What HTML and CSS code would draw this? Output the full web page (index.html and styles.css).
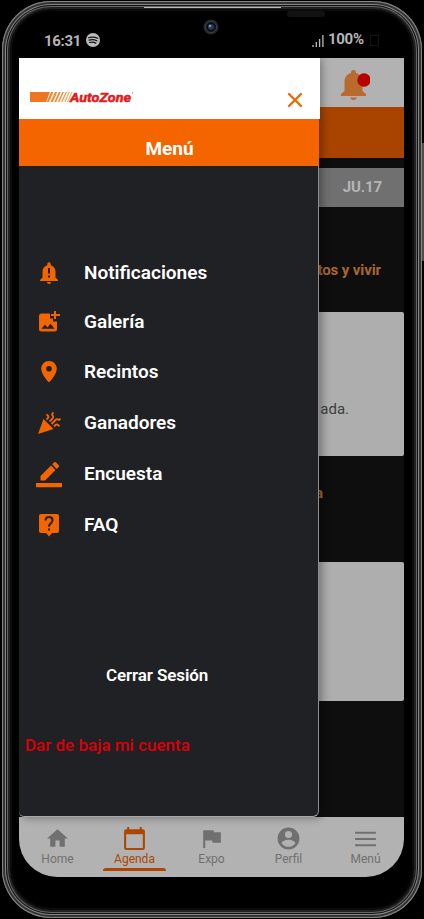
FILE: index.html
```html
<!DOCTYPE html>
<html lang="es">
<head>
<meta charset="utf-8">
<title>AutoZone Agenda</title>
<link rel="stylesheet" href="styles.css">
</head>
<body>
<div class="phone">
  <span class="top-shine"></span><span class="speaker"></span><span class="side-button"></span>
  <div class="status">
    <span class="clock">16:31</span>
    <svg class="spotify" viewBox="0 0 14 14"><circle cx="7" cy="7" r="7" fill="#bbb"/><path d="M2.500 4.700q5-1.500 9.200.6M3 7.200q4.300-1.200 7.800.6M3.500 9.500q3.500-.8 6.300.6" fill="none" stroke="#111" stroke-width="1.200" stroke-linecap="round"/></svg>
    <svg class="camera" viewBox="0 0 16 16"><circle cx="8" cy="8" r="7.500" fill="#24282b"/><circle cx="8" cy="8" r="5.500" fill="#0b1016" stroke="#3c4248"/><circle cx="8" cy="8" r="3" fill="#25384e"/><circle cx="7" cy="7" r="1.300" fill="#8195a8"/></svg>
    <svg class="signal" viewBox="0 0 12 13"><path d="M1 13v-2M4.300 13V8M7.600 13V5M10.900 13V1" stroke="#bbb" stroke-width="1.300"/></svg>
    <span class="percent">100%</span><span class="battery"></span>
  </div>
  <div class="screen">
    <header class="app-header">
      <svg class="bell" viewBox="0 0 32 32"><path d="M3 27v-2l3.500-3v-9c0-5 2.500-8 6.500-9V3q0-2 2.500-2T18 3v1c4 1 6.500 4 6.500 9v9l3.500 3v2z" fill="#b96b2e"/><path d="M12 28.500h7q-1 2.500-3.500 2.500T12 28.500z" fill="#b96b2e"/><circle cx="26" cy="11" r="6.700" fill="#b90000"/></svg>
    </header>
    <div class="banner"></div>
    <div class="date">JU.17</div>
    <h2 class="topic">tos y vivir</h2>
    <article class="card first">ada.</article>
    <h2 class="topic second-topic">a</h2>
    <article class="card second"></article>
    <nav class="tabs">
      <a><svg viewBox="0 0 24 24"><path d="M10 20v-6h4v6h5v-8h3L12 3 2 12h3v8z"/></svg><span>Home</span></a>
      <a class="active"><svg viewBox="0 0 24 24"><path d="M20 3h-1V1h-2v2H7V1H5v2H4q-2 0-2 2v16q0 2 2 2h16q2 0 2-2V5q0-2-2-2zm0 18H4V8h16z"/></svg><span>Agenda</span></a>
      <a><svg viewBox="0 0 24 24"><path d="M14.400 6 14 4H4v17h2v-7h6.600l.4 2h8V6z"/></svg><span>Expo</span></a>
      <a><svg viewBox="0 0 24 24"><path d="M12 1.500a10.500 10.500 0 1 0 0 21 10.500 10.500 0 0 0 0-21zm0 3.300a3.400 3.400 0 1 1 0 6.800 3.400 3.400 0 0 1 0-6.800zM12 20a8 8 0 0 1-6.600-3.500c0-2.200 4.400-3.400 6.600-3.400s6.600 1.200 6.600 3.400A8 8 0 0 1 12 20z"/></svg><span>Perfil</span></a>
      <a><svg viewBox="0 0 24 24"><path d="M2 5.500h20v2H2zm0 6h20v2H2zm0 6h20v2H2z"/></svg><span>Menú</span></a>
    </nav>
    <aside class="drawer">
      <header class="drawer-head">
        <svg class="logo" viewBox="0 0 106 14"><path d="M1 2h20l-4 10H1z" fill="#ed7622"/><path d="m22 2-4.500 10h2.500l4.500-10zM26 2l-4.500 10h2.300l4.500-10zM29.800 2l-4.500 10h1.900l4.500-10zM33.400 2l-4.500 10h1.500l4.500-10zM36.700 2l-4.500 10h1.200l4.500-10zM39.800 2l-4.500 10h1l4.500-10zM42.600 2l-4.500 10h.8l4.500-10z" fill="#ef8b38"/><text class="wordmark" x="41" y="12.300" textLength="61" lengthAdjust="spacingAndGlyphs">AutoZone</text><circle cx="103.500" cy="3" r=".7" fill="#d86c6c"/></svg>
        <svg class="close" viewBox="0 0 16 16"><path d="m2 2 12 12M14 2 2 14" fill="none" stroke="#f26500" stroke-width="2.200" stroke-linecap="round"/></svg>
      </header>
      <h1 class="drawer-title">Menú</h1>
      <ul class="menu">
        <li><svg viewBox="0 0 24 24"><path fill-rule="evenodd" d="M18.500 16.500V11c0-3.500-1.600-6-4.800-6.800V3a1.700 1.700 0 0 0-3.400 0v1.200C7.100 5 5.500 7.500 5.500 11v5.500L3 19v1h18v-1zM11 7h2v5.500h-2zm0 7.500h2v2h-2zM10 21h4a2 2 0 0 1-4 0z"/></svg><span>Notificaciones</span></li>
        <li><svg viewBox="0 0 24 24"><path fill-rule="evenodd" d="M4 3.500h9v5h3v3h4V19q0 2.500-2.500 2.500H4.500Q2 21.500 2 19V6q0-2.500 2-2.500zM4.500 18.700h13l-4-5-3 3.700-2.500-3zM17 9V6h-3V4h3V1h2v3h4v2h-4v3z"/></svg><span>Galería</span></li>
        <li><svg viewBox="0 0 24 24"><path fill-rule="evenodd" d="M12 1C7.600 1 4.200 4.400 4.200 8.800 4.200 14.600 12 22.500 12 22.500s7.800-7.900 7.800-13.700C19.800 4.400 16.400 1 12 1zm0 5a2.800 2.800 0 1 1 0 5.600A2.800 2.800 0 0 1 12 6z"/></svg><span>Recintos</span></li>
        <li><svg viewBox="0 0 24 24"><path d="M1 23 6.500 8l10 10z"/><path d="M9.500 8.500 11 7q1-1.200-.3-2.500L9.500 3.300M12.500 10.500l3-3q1.500-1.500 0-3-1.200-1.400 1-3M14.500 13l4-4q1.500-1.500 2.500-.5t2.500-.8M17 15.500l1.500-1.500q1.500-1.200 3 .3l1 1" fill="none" stroke="#f26500" stroke-width="1.800"/></svg><span>Ganadores</span></li>
        <li><svg class="wide" viewBox="0 0 28 28"><path d="M5.500 16 16 5.500l4.500 4.500L10 20.500H5.500zM17.200 4.300l2-2q.8-.8 1.600 0l3 3q.8.800 0 1.600l-2.100 2.100zM1 23h26v4.300H1z"/></svg><span>Encuesta</span></li>
        <li><svg viewBox="0 0 24 24"><path d="M4 1h16q2 0 2 2v15q0 2-2 2h-5l-3 3.500L9 20H4q-2 0-2-2V3q0-2 2-2z"/><path d="M8.500 7.500q0-3.500 3.500-3.500t3.500 3.200q0 1.800-1.800 3.200T12 13.700M12 15.500v2" fill="none" stroke="#202124" stroke-width="2"/></svg><span>FAQ</span></li>
      </ul>
      <div class="logout">Cerrar Sesión</div>
      <div class="delete">Dar de baja mi cuenta</div>
    </aside>
  </div>
</div>
</body>
</html>
```

FILE: styles.css
```css
* { box-sizing: border-box; }
body { margin: 0; background: #000; font-family: Roboto, sans-serif; }
.phone {
  position: relative;
  width: 420px;
  height: 917px;
  margin: 1px 2px;
  padding: 0 16px 0 17px;
  border-radius: 49px;
  background: #000;
  box-shadow: inset 0 0 0 1px #858585, inset 0 0 0 3px #343434, inset 0 0 0 4px #858585, inset 0 0 0 5px #111, inset 0 0 0 6px #666, inset 0 0 0 8px #222, inset 0 0 0 10px #0b0b0b;
}
.top-shine { position: absolute; left: 142px; top: 6px; width: 137px; height: 1px; background: #bbb; }
.speaker { position: absolute; left: 285px; top: 10px; width: 38px; height: 6px; border-radius: 3px; background: #121212; }
.side-button { position: absolute; left: 420px; top: 142px; width: 2px; height: 118px; background: #4d4d4d; }
.status { position: relative; display: flex; align-items: center; height: 57px; padding: 21px 24px 0 25px; color: #b5b5b5; }
.clock { width: 38px; font: 700 15px Roboto, sans-serif; letter-spacing: -.3px; position: relative; top: 1px; }
.spotify { width: 14px; height: 14px; margin-left: 4px; }
.camera { position: absolute; left: 184px; top: 18px; width: 16px; height: 16px; }
.signal { width: 12px; height: 13px; margin-left: auto; }
.percent { width: 39px; margin-left: 4px; font: 700 15px Roboto, sans-serif; letter-spacing: -.3px; position: relative; top: -1px; }
.battery { width: 9px; height: 11px; margin: 0 3px 0 3px; border: 1px solid #121212; }
.screen { position: relative; width: 385px; height: 819px; background: #0e0e0e; border-radius: 0 0 38px 38px; }
.app-header { height: 49px; padding: 11px 0 0 319px; background: #b2b2b2; }
.bell { display: block; width: 32px; height: 32px; }
.banner { height: 51px; background: #a94400; }
.date { height: 39px; margin-top: 10px; padding-right: 22px; background: #707070; color: #b5b5b5; font-size: 15px; line-height: 39px; font-weight: 700; text-align: right; letter-spacing: -.1px; }
.topic { height: 20px; margin: 53px 23px 0 0; color: #ad6530; font-size: 15px; line-height: 20px; text-align: right; letter-spacing: -.1px; }
.card { background: #aeaeae; border-radius: 2px; }
.first { height: 144px; margin-top: 32px; padding: 88px 55px 0 0; color: #3e3e3e; font-size: 15px; line-height: 18px; text-align: right; }
.second-topic { margin: 27px 81px 0 0; }
.second { height: 139px; margin-top: 59px; }
.tabs { display: grid; grid-template-columns: repeat(5, 1fr); height: 60px; margin-top: 116px; padding-top: 9px; background: #b2b2b2; border-radius: 0 0 38px 38px; color: #707070; }
.tabs a { display: flex; flex-direction: column; align-items: center; font-size: 12px; line-height: 14px; }
.tabs svg { width: 25px; height: 25px; fill: currentColor; }
.tabs span { position: relative; top: 1px; }
.tabs .active { color: #ac4600; }
.active::after { content: ""; width: 63px; height: 3px; margin-top: 3px; border-radius: 3px 3px 0 0; background: currentColor; }
.drawer { position: absolute; left: 0; top: 0; width: 300px; height: 759px; background: #202124; border-right: 1px solid #8b8d90; border-bottom: 1px solid #a8a8a8; border-radius: 0 0 6px 5px; box-shadow: 3px 1px 8px rgba(0,0,0,.35); }
.drawer-head { display: flex; width: 301px; height: 61px; padding: 32px 17px 0 10px; justify-content: space-between; background: #fff; }
.logo { width: 106px; height: 14px; }
.wordmark { fill: #e11b22; font: italic 700 13px Roboto, sans-serif; stroke: #e11b22; stroke-width: .5px; }
.close { width: 16px; height: 16px; margin-top: 2px; }
.drawer-title { width: 300px; height: 47px; margin: 0; padding: 18px 0 0 1px; background: #f46500; color: #fff; text-align: center; font-size: 19px; line-height: 23px; }
.menu { display: grid; grid-template-rows: 49px 50px 51px 51px 51px 50px; height: 302px; margin: 82px 0 0; padding: 0; list-style: none; color: #fff; font-size: 19px; font-weight: 600; line-height: 48px; }
.menu li { display: grid; grid-template-columns: 30px 1fr; align-items: center; justify-items: center; height: 49px; column-gap: 20px; padding-left: 15px; }
.menu li span { justify-self: start; }
.menu svg { width: 24px; height: 24px; fill: #f26500; }
.menu .wide { width: 28px; height: 28px; }
.logout { margin: 114px 0 0 87px; color: #fff; font-size: 17px; font-weight: 600; line-height: 22px; letter-spacing: -.1px; }
.delete { margin: 48px 0 0 6px; color: #d8000a; font-size: 17px; font-weight: 500; line-height: 22px; }
```
